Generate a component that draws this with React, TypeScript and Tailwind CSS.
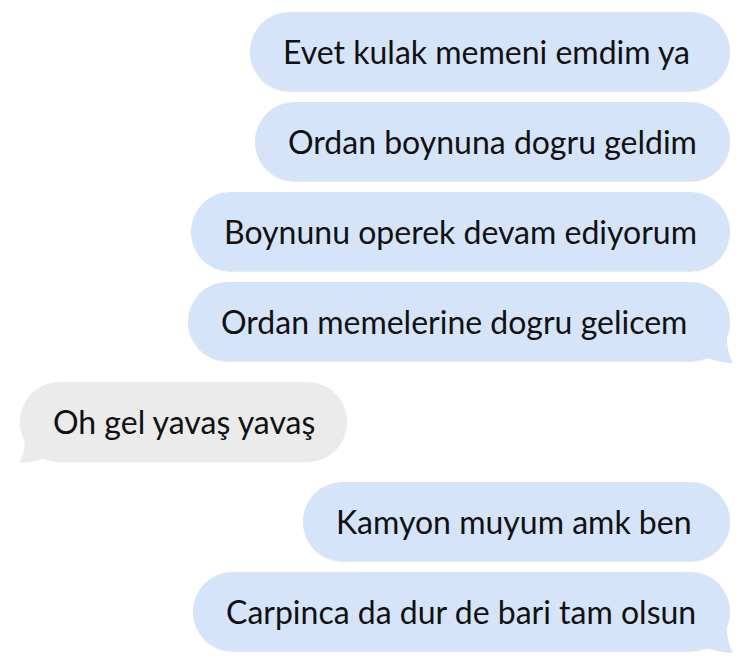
import React from 'react';

type Msg = { text: string; me: boolean; tail?: boolean; w: string };

const messages: Msg[] = [
    { text: 'Evet kulak memeni emdim ya', me: true, w: 'w-[480px]' },
    { text: 'Ordan boynuna dogru geldim', me: true, w: 'w-[475px]' },
    { text: 'Boynunu operek devam ediyorum', me: true, w: 'w-[539px]' },
    { text: 'Ordan memelerine dogru gelicem', me: true, tail: true, w: 'w-[542px]' },
    { text: 'Oh gel yavaş yavaş', me: false, tail: true, w: 'w-[327px]' },
    { text: 'Kamyon muyum amk ben', me: true, w: 'w-[427px]' },
    { text: 'Carpinca da dur de bari tam olsun', me: true, tail: true, w: 'w-[537px]' },
];

const Tail = ({ me }: { me: boolean }) =>
    me ? (
        <svg className="absolute right-[-5px] bottom-[-3px]" width="30" height="28" viewBox="0 0 30 28">
            <path d="M22 0 C22 12 24 20 28 27 C22 27 12 25 0 22 L0 0 Z" fill="#d5e4f8" />
        </svg>
    ) : (
        <svg className="absolute left-[-3px] bottom-[-3px]" width="30" height="28" viewBox="0 0 30 28">
            <path d="M8 0 C8 12 6 20 2 27 C8 27 18 25 30 22 L30 0 Z" fill="#ebebeb" />
        </svg>
    );

const App = () => {
    return (
        <div className="w-[739px] h-[668px] bg-white overflow-hidden pt-[12px] pl-[20px] pr-[9px] flex flex-col gap-[11px] font-['Lato','Liberation_Sans',sans-serif]">
            {messages.map((m, i) => (
                <div key={i} className={`flex ${m.me ? 'justify-end' : 'justify-start'} ${i === 4 ? 'my-[10px]' : ''}`}>
                    <div
                        className={`relative h-[79px] ${m.w} rounded-full flex items-center pl-[33px] text-[32px] text-[#111] whitespace-nowrap shadow-[0_1px_1px_rgba(0,0,0,0.1)] ${
                            m.me ? 'bg-[#d5e4f8]' : 'bg-[#ebebeb]'
                        }`}
                    >
                        {m.tail && <Tail me={m.me} />}
                        <span className="relative">{m.text}</span>
                    </div>
                </div>
            ))}
        </div>
    );
};

export default App;
